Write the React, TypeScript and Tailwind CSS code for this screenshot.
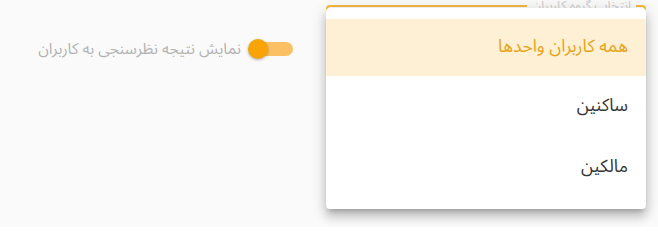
import React from "react";

export default function App() {
  return (
    <div
      className="relative h-[227px] w-[658px] overflow-hidden bg-[#fafafa]"
      style={{ fontFamily: "'Noto Sans Arabic', 'DejaVu Sans', sans-serif" }}
    >
      <div className="flex h-full w-full items-start">
        {/* left: switch with label */}
        <div className="flex w-[326px] items-center justify-end gap-[7px] pt-[38px] pr-[33px]">
          <span className="pt-[1px] text-[15.5px] leading-[20px] text-[#b3b3b3]" dir="rtl">
            نمایش نتیجه نظرسنجی به کاربران
          </span>
          <div className="relative h-[20px] w-[45px]">
            <div className="absolute right-0 top-[3px] h-[14px] w-[38px] rounded-full bg-[#fcc064]" />
            <div className="absolute left-0 top-0 h-[20px] w-[20px] rounded-full bg-[#f8a406] shadow-[0_1px_3px_rgba(0,0,0,0.3)]" />
          </div>
        </div>
        {/* right: select (focused) */}
        <div className="relative mt-[5px] h-[56px] w-[320px]">
          <div className="absolute inset-0 rounded-[4px] border-2 border-[#f5b93f]" />
          <span
            className="absolute right-[10px] top-[-7px] bg-[#fafafa] px-[5px] text-[13px] leading-[16px] text-[#cfcfcf]"
            dir="rtl"
          >
            انتخاب گروه کاربران
          </span>
        </div>
      </div>
      {/* dropdown menu overlay */}
      <div
        className="absolute left-[326px] top-[8px] w-[320px] rounded-[4px] bg-white py-[11px] shadow-[0_5px_5px_-3px_rgba(0,0,0,0.2),0_8px_10px_1px_rgba(0,0,0,0.14),0_3px_14px_2px_rgba(0,0,0,0.12)]"
        dir="rtl"
      >
        <div className="flex h-[57px] items-center bg-[#fdf0d4] px-[18px] text-[17.5px] text-[#e6a41c]">همه کاربران واحدها</div>
        <div className="flex h-[61px] items-center px-[18px] text-[17.5px] text-[#363636]">ساکنین</div>
        <div className="flex h-[61px] items-center px-[18px] text-[17.5px] text-[#363636]">مالکین</div>
      </div>
    </div>
  );
}
